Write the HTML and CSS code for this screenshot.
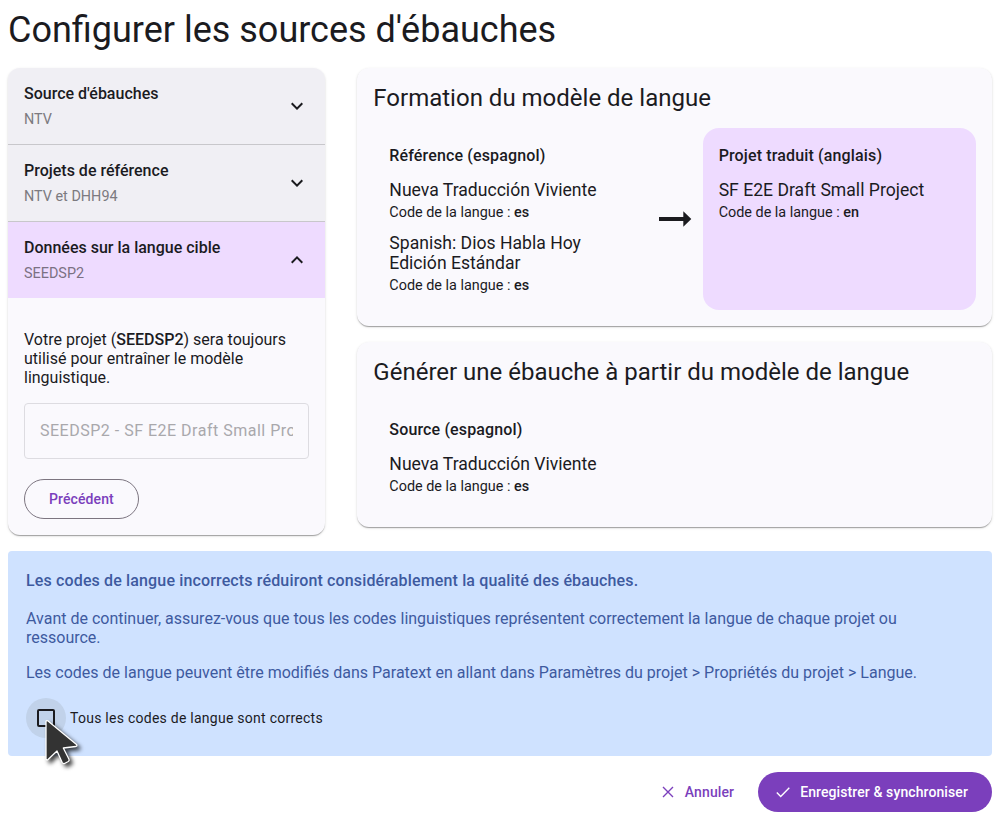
FILE: index.html
```
<!DOCTYPE html>
<html lang="fr">
<head>
<meta charset="utf-8">
<title>Configurer les sources d'ébauches</title>
<link rel="stylesheet" href="styles.css">
</head>
<body>
<h1 class="page-title">Configurer les sources d'ébauches</h1>
<div class="layout">
  <section class="card stepper">
    <div class="step">
      <div><div class="step-title">Source d'ébauches</div><div class="step-sub">NTV</div></div>
      <svg class="chevron" viewBox="0 0 24 24"><path d="M7.41 8.59 12 13.17l4.59-4.58L18 10l-6 6-6-6z"/></svg>
    </div>
    <div class="step">
      <div><div class="step-title">Projets de référence</div><div class="step-sub">NTV et DHH94</div></div>
      <svg class="chevron" viewBox="0 0 24 24"><path d="M7.41 8.59 12 13.17l4.59-4.58L18 10l-6 6-6-6z"/></svg>
    </div>
    <div class="step active">
      <div><div class="step-title">Données sur la langue cible</div><div class="step-sub">SEEDSP2</div></div>
      <svg class="chevron" viewBox="0 0 24 24"><path d="M12 8l-6 6 1.410 1.410L12 10.830l4.590 4.580L18 14z"/></svg>
    </div>
    <div class="step-body">
      <p class="step-text">Votre projet (<b>SEEDSP2</b>) sera toujours utilisé pour entraîner le modèle linguistique.</p>
      <div class="field"><span class="field-value">SEEDSP2 - SF E2E Draft Small Project</span></div>
      <button class="btn outlined">Précédent</button>
    </div>
  </section>
  <div class="overview">
    <section class="card panel">
      <h2 class="panel-title">Formation du modèle de langue</h2>
      <div class="training">
        <div class="group">
          <h3 class="group-title">Référence (espagnol)</h3>
          <div class="project">Nueva Traducción Viviente</div>
          <div class="code">Code de la langue : <b>es</b></div>
          <div class="project">Spanish: Dios Habla Hoy Edición Estándar</div>
          <div class="code">Code de la langue : <b>es</b></div>
        </div>
        <svg class="arrow" viewBox="0 0 32 16"><path d="M0 6h24.300V.3L32.300 8l-8 7.700V10H0z"/></svg>
        <div class="group target">
          <h3 class="group-title">Projet traduit (anglais)</h3>
          <div class="project">SF E2E Draft Small Project</div>
          <div class="code">Code de la langue : <b>en</b></div>
        </div>
      </div>
    </section>
    <section class="card panel">
      <h2 class="panel-title">Générer une ébauche à partir du modèle de langue</h2>
      <div class="group">
        <h3 class="group-title">Source (espagnol)</h3>
        <div class="project">Nueva Traducción Viviente</div>
        <div class="code">Code de la langue : <b>es</b></div>
      </div>
    </section>
  </div>
</div>
<section class="notice">
  <p class="notice-title">Les codes de langue incorrects réduiront considérablement la qualité des ébauches.</p>
  <p class="notice-text">Avant de continuer, assurez-vous que tous les codes linguistiques représentent correctement la langue de chaque projet ou ressource.</p>
  <p class="notice-text">Les codes de langue peuvent être modifiés dans Paratext en allant dans Paramètres du projet &gt; Propriétés du projet &gt; Langue.</p>
  <div class="confirm">
    <span class="check-ripple"><span class="checkbox"></span>
      <svg class="cursor" viewBox="0 0 44 56"><path d="M2 2.500V40q.6 1.500 2 .5l9-8.500 5.200 11.500q.8 1.500 2.300 1l3.800-2q1.300-.8.7-2.200L19.300 29l12.400-1.500q2-.6.8-2L4 1.900Q2.300 1 2 2.500z"/></svg>
    </span>
    <span class="confirm-label">Tous les codes de langue sont corrects</span>
  </div>
</section>
<div class="actions">
  <button class="btn plain"><svg class="btn-icon" viewBox="0 0 18 18"><path d="M4 4l10 10M14 4L4 14"/></svg>Annuler</button>
  <button class="btn filled"><svg class="btn-icon" viewBox="0 0 18 18"><path d="M2.800 9.500 6.700 13.400 15.300 4.800"/></svg>Enregistrer &amp; synchroniser</button>
</div>
</body>
</html>
```
FILE: styles.css
```
* { box-sizing: border-box; }
body { margin: 0; padding: 8px; background: #fff; color: #1b1b1f; font-family: Roboto, sans-serif; font-size: 16px; }
h1, h2, h3, p { margin: 0; }
b { font-weight: 500; }
.page-title { font-size: 36px; font-weight: 400; line-height: 44px; margin-bottom: 16px; }
.layout { display: grid; grid-template-columns: minmax(0, 1fr) minmax(0, 2fr); gap: 32px; align-items: start; }
.card { background: #faf9fd; border-radius: 12px; box-shadow: 0 2px 1px -1px rgba(0,0,0,.2), 0 1px 1px rgba(0,0,0,.14), 0 1px 3px rgba(0,0,0,.12); }
.stepper { overflow: hidden; height: 467px; }
.step { height: 77px; padding: 15px 16px 0; display: flex; justify-content: space-between; background: #f0eff4; border-bottom: 1px solid #c8c7cb; }
.step.active { height: 76px; background: #eedbff; border-bottom: 0; }
.step-title { font-weight: 500; line-height: 21px; }
.step-sub { margin-top: 5px; font-size: 14.4px; line-height: 22px; color: #7c7a80; }
.active .step-sub { color: #7b7183; }
.chevron { width: 24px; height: 24px; margin-top: 11px; fill: #1b1b1f; }
.step-body { padding: 32px 16px 16px; }
.step-text { line-height: 19px; }
.field { height: 56px; margin: 16px 0 20px; padding: 0 15px 2px; border: 1px solid #dddce1; border-radius: 4px; display: flex; align-items: center; color: #a9a8ac; }
.field-value { overflow: hidden; white-space: nowrap; letter-spacing: .5px; }
.btn { height: 40px; border: 0; border-radius: 20px; font: 500 14px/20px Roboto, sans-serif; letter-spacing: .1px; display: inline-flex; align-items: center; background: none; color: #7b3fbc; }
.outlined { border: 1px solid #7c7580; padding: 0 24px; }
.overview { display: grid; gap: 16px; }
.panel { padding: 16px; }
.panel-title { font-size: 24px; font-weight: 400; line-height: 28px; margin-bottom: 16px; }
.training { display: grid; grid-template-columns: 1fr 32px 1fr; gap: 12px; align-items: center; }
.group { padding: 18px 16px 16px; align-self: stretch; }
.target { background: #eedbff; border-radius: 16px; }
.arrow { width: 32px; height: 16px; fill: #1b1b1f; overflow: visible; }
.group-title { font-size: 16px; font-weight: 500; line-height: 19px; letter-spacing: .144px; margin-bottom: 15px; }
.project { font-size: 17.6px; line-height: 20px; margin-bottom: 4px; }
.code { font-size: 14.4px; line-height: 17px; }
.code + .project { margin-top: 12px; }
.notice { margin-top: 16px; height: 205px; padding: 20px 18px 0; border-radius: 4px; background: #cfe2ff; color: #3e5a9f; line-height: 19px; }
.notice-title { font-weight: 500; letter-spacing: .144px; margin-bottom: 19px; }
.notice-text { margin-bottom: 16px; }
.confirm { display: flex; align-items: center; gap: 4px; color: #1b1b1f; font-size: 14px; line-height: 20px; letter-spacing: .256px; }
.check-ripple { position: relative; width: 40px; height: 40px; border-radius: 50%; background: #c1d2ea; display: flex; align-items: center; justify-content: center; }
.checkbox { width: 18px; height: 18px; border: 2px solid #1b1b1f; border-radius: 2px; }
.cursor { position: absolute; left: 17.500px; top: 21px; width: 44px; height: 56px; fill: #333; stroke: #fff; stroke-width: 1.300px; stroke-linejoin: round; filter: drop-shadow(3px 3px 2px rgba(0,0,0,.75)); }
.actions { margin-top: 16px; display: flex; justify-content: flex-end; gap: 12px; }
.btn-icon { width: 18px; height: 18px; margin-right: 8px; fill: none; stroke: currentColor; stroke-width: 1.400px; }
.plain { padding: 0 12px 0 11px; }
.filled { padding: 0 24px 0 16px; background: #7b3fbc; color: #fff; }
```
